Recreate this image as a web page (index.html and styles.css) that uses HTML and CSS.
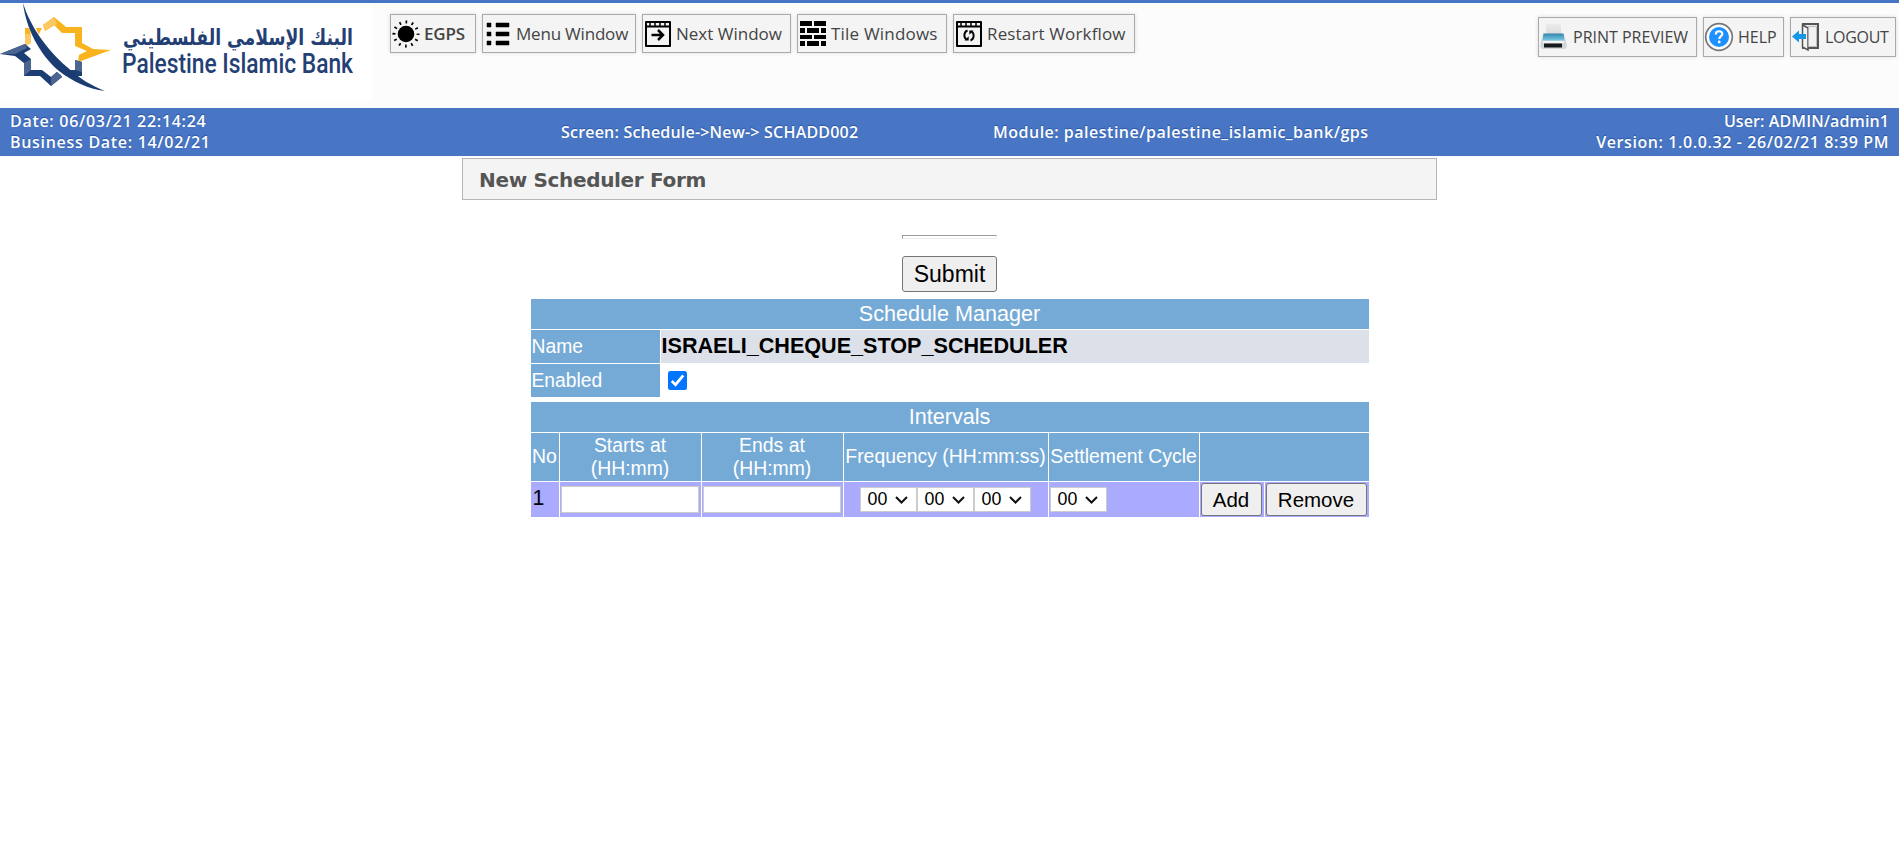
FILE: index.html
```html
<!DOCTYPE html>
<html lang="en">
<head>
<meta charset="utf-8">
<title>New Scheduler Form</title>
<link rel="stylesheet" href="styles.css">
</head>
<body>
<header class="header">
  <div class="logo">
    <svg width="372" height="98" viewBox="0 3 372 98">
      <path fill="#f9b31c" d="M43 25 54 17 66 27H82V43L93 49 111 50 78 62 79 55 87 51 75 46V33H62L54 25 45 31Z"/>
      <path fill="#fcc862" d="M43 25 54 17 57 24 45 31ZM25 28H31V43L25 47Z"/>
      <path fill="#f9b31c" d="M25 28H42L39 34H25Z"/>
      <path fill="#1d3e74" d="M0 54 25 44 31 49 24 53 31 59V70H42L51 77 59 70 62 77 51 86 40 76H24V63L15 56ZM75 60 82 62V76H66L62 70H75Z"/>
      <path fill="#4b6590" d="M24 63 31 59V70L24 76ZM51 77 59 70 62 77 51 86ZM75 60 82 62V72L75 70ZM0 54 25 44 27 48 15 54Z"/>
      <path fill="#fff" d="M29 28 36 28C44 48 55 63 66 70L62 76C47 64 34 48 29 28Z"/>
      <path fill="#1b3c73" d="M23 3C30 26 47 50 67 67 80 79 92 86 105 91 88 89 72 81 59 71 39 54 26 28 23 3Z"/>
      <text class="logo-arabic" x="353" y="45" textLength="230" lengthAdjust="spacingAndGlyphs">البنك الإسلامي الفلسطيني</text>
      <text class="logo-latin" x="122" y="73" textLength="231" lengthAdjust="spacingAndGlyphs">Palestine Islamic Bank</text>
    </svg>
  </div>
  <nav class="toolbar">
    <button class="tool tool-egps">
      <svg class="tool-icon" viewBox="0 0 28 28"><circle cx="14" cy="14" r="8.3"/><circle cx="14" cy="14" r="12" fill="none" stroke="#000" stroke-width="3" stroke-dasharray="1.7 4.583" stroke-dashoffset=".85"/></svg>
      <span>EGPS</span>
    </button>
    <button class="tool tool-menu">
      <svg class="tool-icon" viewBox="0 0 28 28"><path d="M3 3h4v4H3zM3 12h4v4H3zM3 21h4v4H3zM12 3h13v4H12zM12 12h13v4H12zM12 21h13v4H12z" stroke="#000" stroke-width=".5" stroke-linejoin="round"/></svg>
      <span>Menu Window</span>
    </button>
    <button class="tool tool-next">
      <svg class="tool-icon" viewBox="0 0 28 28"><path d="M2 2h24v24H2zM2 6.5h24" fill="none" stroke="#000" stroke-width="2" stroke-linejoin="round"/><path d="M6 2v4M11 2v4M16 2v4M21 2v4" stroke="#000" stroke-width="1.5"/><path d="M7.5 15h11M14 10l5 5-5 5" fill="none" stroke="#000" stroke-width="2.5"/></svg>
      <span>Next Window</span>
    </button>
    <button class="tool tool-tile">
      <svg class="tool-icon" viewBox="0 0 28 28"><path d="M1 1h12v5H1zM15 1h12v5H15zM1 8h5v5H1zM8 8h12v5H8zM22 8h5v5h-5zM1 15h12v4H1zM15 15h12v4H15zM1 21h5v5H1zM8 21h12v5H8zM22 21h5v5h-5z"/></svg>
      <span>Tile Windows</span>
    </button>
    <button class="tool tool-restart">
      <svg class="tool-icon" viewBox="0 0 28 28"><path d="M2 2h24v24H2zM2 6.5h24" fill="none" stroke="#000" stroke-width="2" stroke-linejoin="round"/><path d="M6 2v4M11 2v4M16 2v4M21 2v4" stroke="#000" stroke-width="1.5"/><path d="M12.500 10.500C8.500 12 8.500 17.500 11.500 19.500M15.500 20.500C19.500 19 19.500 13.500 16.500 11.500" fill="none" stroke="#000" stroke-width="1.9"/><path d="M9.500 20.500h4.200v-4.200zM18.500 10.500h-4.200v4.200z"/></svg>
      <span>Restart Workflow</span>
    </button>
  </nav>
  <nav class="session">
    <button class="tool tool-print">
      <svg class="session-icon" viewBox="0 0 30 30">
        <defs><linearGradient id="paper" x2="0" y2="1"><stop stop-color="#ececec"/><stop offset="1" stop-color="#d8d8d8"/></linearGradient><linearGradient id="tray" x2="0" y2="1"><stop stop-color="#3184a8"/><stop offset="1" stop-color="#79cae8"/></linearGradient></defs>
        <path d="M7 2h15v12H7z" fill="url(#paper)"/><path d="M4 12h21l3 12-2 3H3l-2-3z" fill="#d0d6da"/><path d="M4.500 11.500h20l1 7h-22z" fill="url(#tray)"/><path d="M5 21.500h18v4H5z" fill="#171a1c"/><path d="M4 19h21v2H4z" fill="#f5f5f5"/>
      </svg>
      <span>PRINT PREVIEW</span>
    </button>
    <button class="tool tool-help">
      <svg class="session-icon" viewBox="0 0 30 30"><circle cx="15" cy="15" r="13.300" fill="#fff" stroke="#777" stroke-width="1.700"/><circle cx="15" cy="15" r="10" fill="#1e90ff"/><path d="M11.800 12.500c0-4.500 6.500-4 6.500-.6 0 2.200-3 2.200-3 5" fill="none" stroke="#fff" stroke-width="2.200"/><circle cx="15.200" cy="20" r="1.400" fill="#fff"/></svg>
      <span>HELP</span>
    </button>
    <button class="tool tool-logout">
      <svg class="session-icon" viewBox="0 0 30 30"><path d="M12 2h15v24H12z" fill="#e9e9e9" stroke="#555" stroke-width="2"/><path d="M11.500 3l5.500 3v22l-5.500-3z" fill="#f4f4f4" stroke="#555" stroke-width="1.500"/><path d="M17.500 4.500h8v20h-8z" fill="#f1f1f1" stroke="#aaa" stroke-width=".7"/><path d="M1 14.500l7-6v3.500h7v5H8v3.500z" fill="#1796e6"/></svg>
      <span>LOGOUT</span>
    </button>
  </nav>
</header>

<div class="status">
  <div class="status-dates"><div class="t-date">Date: 06/03/21 22:14:24</div><div class="t-business">Business Date: 14/02/21</div></div>
  <div class="status-screen">Screen: Schedule-&gt;New-&gt; SCHADD002</div>
  <div class="status-module">Module: palestine/palestine_islamic_bank/gps</div>
  <div class="status-user"><div class="t-user">User: ADMIN/admin1</div><div class="t-version">Version: 1.0.0.32 - 26/02/21 8:39 PM</div></div>
</div>

<main class="main">
  <h1 class="form-title"><span>New Scheduler Form</span></h1>
  <div class="submit-area">
    <div class="rule"></div>
    <button class="btn submit">Submit</button>
  </div>
  <section class="manager">
    <div class="band">Schedule Manager</div>
    <div class="label">Name</div>
    <div class="name-value">ISRAELI_CHEQUE_STOP_SCHEDULER</div>
    <div class="label">Enabled</div>
    <div class="enabled-value">
      <svg width="19" height="19" viewBox="0 0 19 19"><rect width="19" height="19" rx="2.500" fill="#0075ff"/><path d="M3.800 10l3.700 3.700L15.300 4.300" fill="none" stroke="#fff" stroke-width="2.700"/></svg>
    </div>
  </section>
  <section class="intervals">
    <div class="band">Intervals</div>
    <div class="col-head">No</div>
    <div class="col-head">Starts at<br>(HH:mm)</div>
    <div class="col-head">Ends at<br>(HH:mm)</div>
    <div class="col-head">Frequency (HH:mm:ss)</div>
    <div class="col-head">Settlement Cycle</div>
    <div class="col-head col-actions"></div>
    <div class="cell cell-no">1</div>
    <div class="cell"><input class="time" type="text"></div>
    <div class="cell"><input class="time" type="text"></div>
    <div class="cell cell-frequency">
      <div class="select">00<svg class="chevron" viewBox="0 0 13 8"><path d="M1 1l5.500 5.500L12 1"/></svg></div>
      <div class="select">00<svg class="chevron" viewBox="0 0 13 8"><path d="M1 1l5.500 5.500L12 1"/></svg></div>
      <div class="select">00<svg class="chevron" viewBox="0 0 13 8"><path d="M1 1l5.500 5.500L12 1"/></svg></div>
    </div>
    <div class="cell"><div class="select">00<svg class="chevron" viewBox="0 0 13 8"><path d="M1 1l5.500 5.500L12 1"/></svg></div></div>
    <div class="cell cell-action"><button class="btn add">Add</button></div>
    <div class="cell cell-action"><button class="btn remove">Remove</button></div>
  </section>
</main>
</body>
</html>
```

FILE: styles.css
```css
* { box-sizing: border-box; }
body { margin: 0; background: #fff; font-family: "Liberation Sans", Arial, sans-serif; }
button { font: inherit; white-space: nowrap; }

.header { display: flex; height: 108px; border-top: 3px solid #4775c4; background: #fcfcfc; }
.logo { width: 372px; height: 98px; background: #fff; }
.logo svg { display: block; overflow: visible; }
.logo-arabic { font: bold 22px "DejaVu Sans", sans-serif; fill: #243f73; direction: rtl; }
.logo-latin { font: 500 28px Roboto, sans-serif; fill: #243f73; }

.toolbar { display: flex; gap: 6px; margin: 11px 0 0 18px; }
.session { display: flex; gap: 6px; margin: 14px 3px 0 auto; }
.tool { display: flex; align-items: center; height: 39px; padding: 0; border: 1px solid #aaa; background: #f4f4f4; color: #444; box-shadow: 0 0 4px #ddd; font: 17px "Open Sans", sans-serif; }
.tool-icon { flex: none; width: 28px; height: 28px; }
.session-icon { flex: none; width: 30px; height: 30px; }
.toolbar .tool { padding-left: 1px; }
.toolbar .tool span { margin-left: 4px; }
.tool-egps { width: 86px; font-weight: 600; letter-spacing: -.2px; }
.tool-menu { width: 154px; letter-spacing: -.2px; }
.tool-next { width: 149px; }
.tool-tile { width: 150px; letter-spacing: .2px; }
.tool-restart { width: 182px; letter-spacing: .15px; }
.session .tool { height: 40px; font-size: 16px; }
.tool-print { width: 159px; }
.tool-help { width: 81px; }
.tool-logout { width: 106px; letter-spacing: -.3px; }
.session .tool span { margin-left: 4px; }

.status { display: grid; grid-template-columns: 551px 432px 500px 1fr; align-items: center; height: 48px; padding: 0 10px; background: #4876c5; color: #fff; font: 600 16px/21px "Open Sans", sans-serif; text-shadow: 0 -1px 1px #2a559f; white-space: nowrap; }
.status-user { text-align: right; }
.t-date, .t-business { letter-spacing: .7px; }
.status-screen { letter-spacing: .2px; }
.status-module { letter-spacing: .5px; }
.t-user { letter-spacing: .1px; }
.t-version { letter-spacing: .6px; }

.main { display: flex; flex-direction: column; align-items: center; padding-top: 2px; }
.form-title { display: flex; align-items: center; width: 975px; height: 42px; margin: 0; padding: 1px 0 0 16px; border: 1px solid #b5b5b5; background: #f4f4f4; color: #555; font: bold 20px "DejaVu Sans", sans-serif; letter-spacing: -.33px; }
.submit-area { display: flex; flex-direction: column; gap: 17px; width: 95px; margin-top: 35px; }
.rule { height: 4px; border: 1px solid; border-color: #9a9a9a #eee #eee #9a9a9a; }
.btn { padding: 0; border: 1px solid #767676; border-radius: 3px; background: #efefef; color: #000; }
.submit { height: 36px; font-size: 23px; }

.manager { display: grid; grid-template-columns: 129px 1fr; grid-template-rows: 30px 33px 33px; gap: 1px; width: 838px; margin-top: 7px; }
.band { display: flex; grid-column: 1 / -1; justify-content: center; align-items: center; background: #76aad6; color: #fff; font-size: 21.600px; }
.label { display: flex; align-items: center; padding-left: 1px; background: #76aad6; color: #fff; font-size: 19.300px; }
.name-value { padding: 4px 0 0 1px; background: #dce0e9; color: #000; font-weight: bold; font-size: 21.600px; line-height: 24px; }
.enabled-value { padding: 7px 0 0 7px; }

.intervals { display: grid; grid-template-columns: 28px 141px 141px 204px 150px 64px 104px; grid-template-rows: 30px 48px 35px; gap: 1px; width: 838px; margin-top: 5px; }
.col-head { display: flex; align-items: center; justify-content: center; padding-bottom: 1px; background: #76aad6; color: #fff; font-size: 19.400px; line-height: 23px; text-align: center; white-space: nowrap; }
.col-actions { grid-column: span 2; }
.cell { display: flex; align-items: center; padding-left: 1px; background: #aaf; }
.cell-no { align-items: flex-start; padding: 4px 0 0 2px; font-size: 21.300px; line-height: 24px; }
.cell-frequency { padding-left: 16px; }
.cell-action { align-items: flex-start; padding-top: 1px; }
.time { width: 138px; height: 27px; padding: 0; border: 1px solid #ccc; background: #fff; }
.select { display: flex; align-items: center; justify-content: space-between; width: 57px; height: 25px; padding: 0 8px 0 7px; border: 1px solid #ccc; background: #fff; color: #000; font-size: 17.800px; }
.chevron { width: 13px; height: 8px; fill: none; stroke: #111; stroke-width: 2; }
.add { width: 61px; height: 33px; padding-top: 1px; font-size: 20.500px; }
.remove { width: 101px; height: 33px; padding-top: 1px; font-size: 20.500px; }
```
